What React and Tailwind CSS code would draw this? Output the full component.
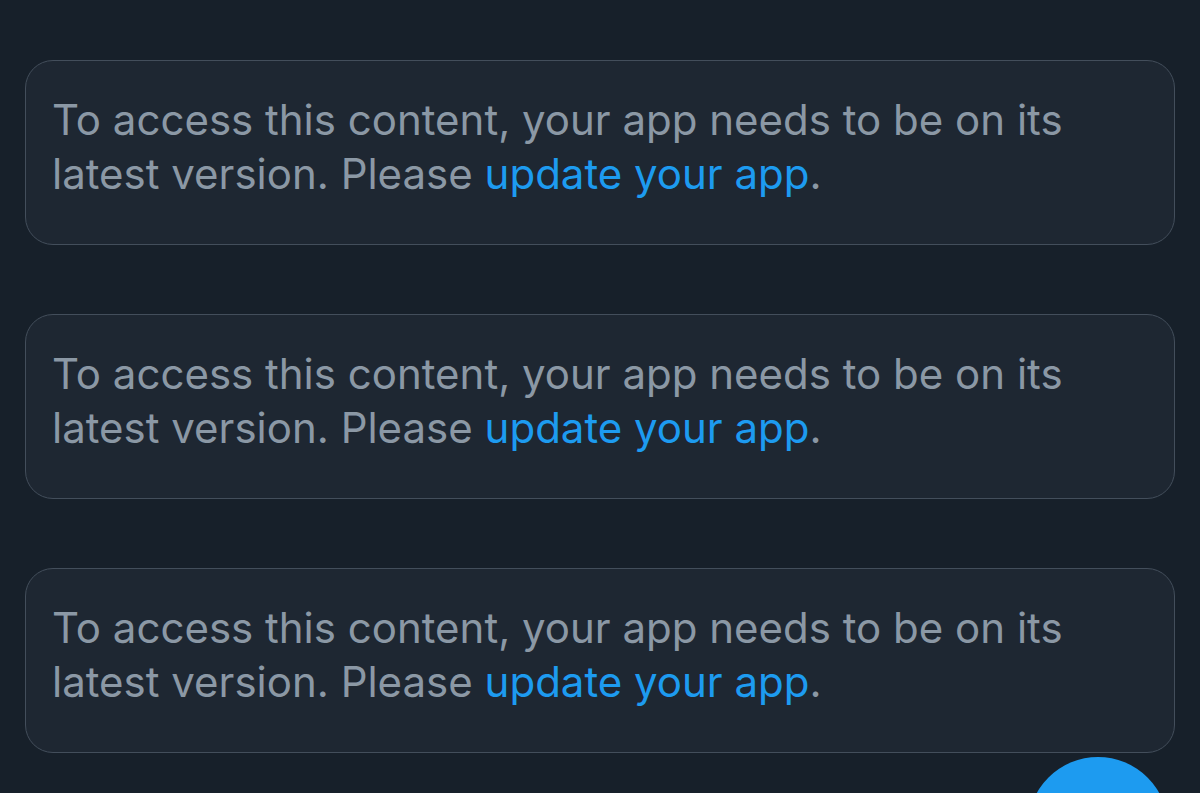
export default function App() {
  const Card = () => (
    <div className="h-[185px] rounded-[28px] border border-[#434e5b] bg-[#1e2732] pl-[26px] pr-[70px] pt-[32px]">
      <p className="text-[42px] leading-[54px] tracking-[0px] text-[#8b98a5]" style={{ fontFamily: 'Inter, "Noto Sans", sans-serif' }}>
        To access this content, your app needs to be on its latest version. Please <span className="text-[#1d9bf0]">update your app</span>.
      </p>
    </div>
  );
  return (
    <div className="relative h-[793px] w-[1200px] overflow-hidden bg-[#17202a]">
      <div className="flex flex-col gap-[69px] px-[25px] pt-[60px]">
        <Card />
        <Card />
        <Card />
      </div>
      <div className="absolute left-[1028px] top-[757px] h-[140px] w-[140px] rounded-full bg-[#1d9bf0]" />
    </div>
  );
}
